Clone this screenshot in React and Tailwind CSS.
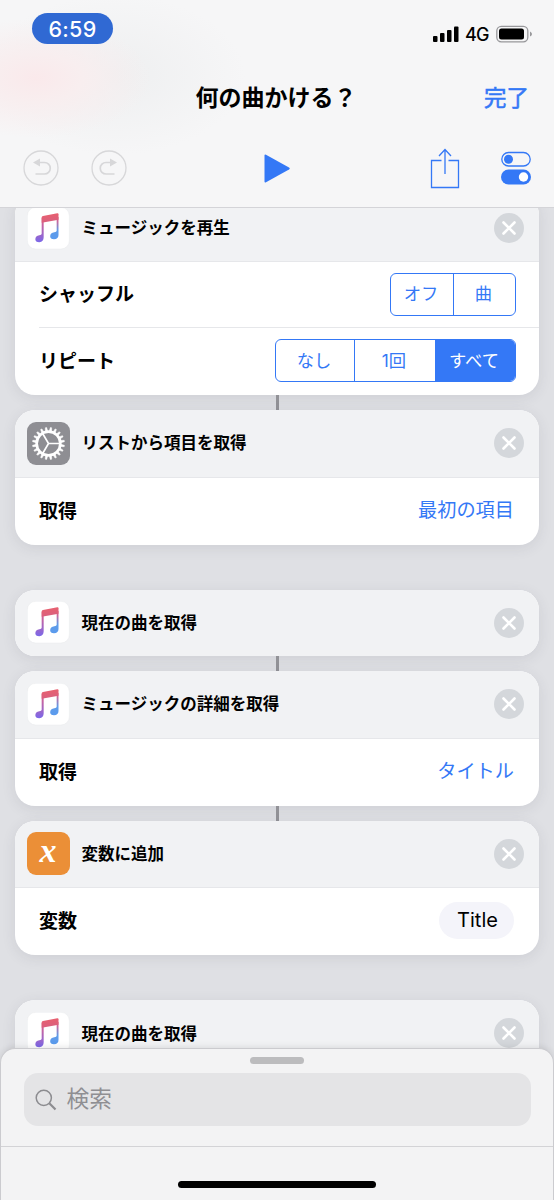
import React from 'react';

const MusicIcon = () => (
  <svg viewBox="0 0 129 129" className="w-[43px] h-[43px] shrink-0">
    <defs>
      <linearGradient id="note" gradientUnits="userSpaceOnUse" x1="62" y1="20" x2="62" y2="106">
        <stop offset="0" stopColor="#e8606f" />
        <stop offset="0.25" stopColor="#d9628f" />
        <stop offset="1" stopColor="#7a68ea" />
      </linearGradient>
      <linearGradient id="noteRight" gradientUnits="userSpaceOnUse" x1="90" y1="20" x2="86" y2="97">
        <stop offset="0" stopColor="#e8606f" />
        <stop offset="0.3" stopColor="#c9689c" />
        <stop offset="0.65" stopColor="#5f9be8" />
        <stop offset="1" stopColor="#5a9bee" />
      </linearGradient>
      <linearGradient id="beam" gradientUnits="userSpaceOnUse" x1="68" y1="20" x2="70" y2="46">
        <stop offset="0" stopColor="#e8606f" />
        <stop offset="1" stopColor="#d9607f" />
      </linearGradient>
    </defs>
    <rect x="1" y="1" width="126" height="125" rx="25" fill="#fff" stroke="#e9eaec" strokeWidth="1.5" />
    <path d="M89 30H94.500V84Q94.500 96 81 97Q69.500 97 69.500 88Q69.500 77 82 75.500Q89 75 89 71Z" fill="url(#noteRight)" />
    <path d="M44 32H50V91Q50 104 37 106Q25 106 25 97Q25 86 37 84.500Q44 84 44 80Z" fill="url(#note)" />
    <path d="M44 32Q44 28 48 27L91 18.500Q94.500 18 94.500 22V38L44 47Z" fill="url(#beam)" />
  </svg>
);

const teeth = Array.from({ length: 20 }, (_, i) => i * 18);

const GearIcon = () => (
  <svg viewBox="0 0 129 129" className="w-[43px] h-[43px] shrink-0">
    <rect width="129" height="129" rx="27" fill="#8e8e93" />
    <g stroke="#fff" fill="none">
      <circle cx="64.500" cy="64.500" r="35.500" strokeWidth="8" />
      {teeth.map((a) => (
        <path key={a} d="M101 61L112.500 62.500V66.500L101 68Z" fill="#fff" strokeWidth="1.5" transform={`rotate(${a + 9} 64.500 64.500)`} />
      ))}
      <path d="M64.500 64.500H99M64.500 64.500L47 34.500M64.500 64.500L47 94.500" strokeWidth="5" />
    </g>
  </svg>
);

const VariableIcon = () => (
  <div className="w-[43px] h-[43px] shrink-0 rounded-[9px] bg-[#eb8f37] text-white flex items-center justify-center">
    <span className="font-['Liberation_Serif',serif] font-bold italic text-[34px] leading-none pb-[6px]">x</span>
  </div>
);

const icons = { music: MusicIcon, gear: GearIcon, variable: VariableIcon };

const CloseButton = () => (
  <button className="w-[30px] h-[30px] rounded-full bg-[#d4d7db] flex items-center justify-center">
    <svg viewBox="0 0 30 30" className="w-[30px] h-[30px]" stroke="#fff" strokeWidth="2.600" strokeLinecap="round">
      <path d="M9.500 9.500L20.500 20.500M20.500 9.500L9.500 20.500" />
    </svg>
  </button>
);

const Card = ({ icon, title, children }) => {
  const Icon = icons[icon];
  return (
    <section className="shrink-0 rounded-[20px] bg-white overflow-hidden shadow-[0_3px_14px_rgba(60,60,80,0.1)]">
      <div className="h-[66.4px] pl-[11.500px] pr-[15.500px] bg-[#f1f2f4] flex items-center">
        <Icon />
        <h2 className="ml-[12px] pt-px flex-1 text-[16.500px] font-bold">{title}</h2>
        <CloseButton />
      </div>
      {children}
    </section>
  );
};

const Row = ({ label, height = 'h-[68.2px]', children }) => (
  <div className={`${height} pb-px pl-6 pr-[25px] border-t border-[#e6e7ea] flex items-center justify-between`}>
    <span className="pt-[3px] text-[19px] font-bold">{label}</span>
    {children}
  </div>
);

const Connector = () => <div className="w-[3px] h-[15px] shrink-0 mx-auto bg-[#929297]" />;

const Segment = ({ className = '', children }) => (
  <button className={`h-full flex items-center justify-center text-[17.300px] pr-[2px] ${className}`}>{children}</button>
);

const Header = () => (
  <header className="relative z-10 h-[208px] shrink-0 border-b border-[#d4d4d8] bg-[#f6f6f7] bg-[radial-gradient(ellipse_115px_60px_at_36px_78px,#fae9eb_0%,#f8eeef_40%,transparent_100%),radial-gradient(ellipse_130px_80px_at_115px_75px,#eeeff0_0%,transparent_100%)]">
    <div className="h-[58px] pl-8 pr-[21px] flex justify-between font-['Inter',sans-serif]">
      <div className="mt-[13px] w-[81px] h-[31px] pt-px rounded-full bg-[#3069d3] text-white text-[21.500px] font-medium tracking-[0.3px] flex items-center justify-center">
        6:59
      </div>
      <div className="mt-[24px] h-5 flex items-center">
        <svg viewBox="0 0 26 16" className="w-[26px] h-4">
          <rect x="0" y="10" width="4.500" height="6" rx="1" />
          <rect x="7" y="7" width="4.500" height="9" rx="1" />
          <rect x="14" y="4" width="4.500" height="12" rx="1" />
          <rect x="21" y="0.500" width="4.500" height="15.500" rx="1" />
        </svg>
        <span className="ml-[6px] pt-px w-[25px] text-[18px] font-medium tracking-[-0.7px]">4G</span>
        <svg viewBox="0 0 37 18" className="ml-[6px] w-[37px] h-[18px]">
          <rect x="0.800" y="1.300" width="31" height="15.500" rx="4.500" fill="none" stroke="#98989b" strokeWidth="1.300" />
          <rect x="3" y="3.500" width="25" height="11" rx="2.500" />
          <path d="M34 6.500Q36 7.500 36 9T34 11.500Z" fill="#98989b" />
        </svg>
      </div>
    </div>
    <div className="h-[78px] pt-[2px] px-[25px] grid grid-cols-[1fr_auto_1fr] items-center">
      <span />
      <h1 className="mr-[2px] text-[23px] font-bold">何の曲かける？</h1>
      <button className="justify-self-end text-[22.500px] text-[#3478f6] [-webkit-text-stroke:0.5px_#3478f6]">完了</button>
    </div>
    <div className="h-[64px] px-[23px] flex items-center">
      <svg viewBox="0 0 36 36" className="w-9 h-9" fill="none" stroke="#d7d7d9" strokeWidth="1.300">
        <circle cx="18" cy="18" r="17" />
        <path d="M16 12.500H21.500A5.500 5.500 0 0 1 21.500 24H12.500" strokeWidth="1.700" />
        <path d="M10 12.500L17 8.500V16.500Z" fill="#d7d7d9" stroke="none" />
      </svg>
      <svg viewBox="0 0 36 36" className="ml-8 w-9 h-9" fill="none" stroke="#d7d7d9" strokeWidth="1.300">
        <circle cx="18" cy="18" r="17" />
        <path d="M20 12.500H15A5.500 5.500 0 0 0 15 24H23.500" strokeWidth="1.700" />
        <path d="M26 12.500L19 8.500V16.500Z" fill="#d7d7d9" stroke="none" />
      </svg>
      <svg viewBox="0 0 26 29" className="ml-[137px] w-[26px] h-[29px]" fill="#3478f6">
        <path d="M0.500 1.500Q0.500 0 2 0.700L25 13.500Q26.500 14.500 25 15.500L2 28.300Q0.500 29 0.500 27.500Z" />
      </svg>
      <svg viewBox="0 0 30 42" className="ml-auto w-[30px] h-[42px]" fill="none" stroke="#3478f6" strokeWidth="1.300">
        <path d="M11.500 13.500H1.500V40.500H28.500V13.500H18.500M15 27V2.500M9 9L15 2.500L21 9" />
      </svg>
      <svg viewBox="0 0 30 34" className="ml-[41px] w-[30px] h-[34px]">
        <rect x="0.800" y="1.500" width="28.400" height="13.500" rx="6.750" fill="none" stroke="#3478f6" strokeWidth="1.300" />
        <circle cx="7.500" cy="8.300" r="4.500" fill="#3478f6" />
        <rect x="0" y="18.500" width="30" height="15" rx="7.500" fill="#3478f6" />
        <circle cx="22.500" cy="26" r="4.700" fill="#fff" />
      </svg>
    </div>
  </header>
);

const SearchSheet = () => (
  <div className="relative z-10 -mt-5 h-[152px] shrink-0 rounded-t-[15px] border border-b-0 border-[#cbcbcf] bg-[#f3f3f4] shadow-[0_-1px_6px_rgba(0,0,0,0.1)]">
    <div className="h-[98px] px-[22.500px] border-b border-[#d3d3d6]">
      <div className="pt-[8px]">
        <div className="mx-auto w-[54px] h-[7px] rounded-full bg-[#bcbcbe]" />
      </div>
      <div className="mt-[9px] h-[53px] rounded-[14px] bg-[#e4e4e6] pl-[11px] flex items-center">
        <svg viewBox="0 0 22 22" className="w-[22px] h-[22px]" fill="none" stroke="#8c8c90">
          <circle cx="8.800" cy="8.800" r="7.600" strokeWidth="1.500" />
          <path d="M14.300 14.300L20.500 20.500" strokeWidth="2.200" />
        </svg>
        <span className="ml-[10px] pb-px text-[22.700px] text-[#8f8f93]">検索</span>
      </div>
    </div>
    <div className="pt-[34px]">
      <div className="mx-auto w-[198px] h-[7px] rounded-full bg-black" />
    </div>
  </div>
);

const App = () => {
  return (
    <div className="w-[554px] h-[1200px] overflow-hidden flex flex-col bg-[#dfe0e4] text-black font-['Inter','Noto_Sans_CJK_JP',sans-serif]">
      <Header />
      <main className="-mt-[13px] h-[873px] shrink-0 overflow-hidden px-[15px] flex flex-col">
        <Card icon="music" title="ミュージックを再生">
          <Row label="シャッフル" height="h-[65.6px]">
            <div className="mr-[-2px] w-[126px] h-[43px] rounded-[6px] border-[1.500px] border-[#3478f6] text-[#3478f6] grid grid-cols-2 overflow-hidden">
              <Segment>オフ</Segment>
              <Segment className="border-l border-[#3478f6]">曲</Segment>
            </div>
          </Row>
          <div className="relative">
            <div className="absolute left-0 top-0 w-6 h-px bg-white" />
            <Row label="リピート">
              <div className="mr-[-2px] mb-px w-[241px] h-[43px] rounded-[6px] border-[1.500px] border-[#3478f6] text-[#3478f6] grid grid-cols-[78px_1fr_80px] overflow-hidden">
                <Segment>なし</Segment>
                <Segment className="border-l border-[#3478f6]">1回</Segment>
                <Segment className="bg-[#3478f6] text-white">すべて</Segment>
              </div>
            </Row>
          </div>
        </Card>
        <Connector />
        <Card icon="gear" title="リストから項目を取得">
          <Row label="取得">
            <span className="text-[19.200px] text-[#3478f6]">最初の項目</span>
          </Row>
        </Card>
        <div className="h-[45px] shrink-0" />
        <Card icon="music" title="現在の曲を取得" />
        <Connector />
        <Card icon="music" title="ミュージックの詳細を取得">
          <Row label="取得">
            <span className="text-[19.200px] text-[#3478f6]">タイトル</span>
          </Row>
        </Card>
        <Connector />
        <Card icon="variable" title="変数に追加">
          <Row label="変数">
            <span className="mb-[2px] w-[75px] h-[37px] rounded-full bg-[#f4f4fa] text-[20px] pl-[2px] flex items-center justify-center">Title</span>
          </Row>
        </Card>
        <div className="h-[45px] shrink-0" />
        <Card icon="music" title="現在の曲を取得" />
      </main>
      <SearchSheet />
    </div>
  );
};

export default App;
